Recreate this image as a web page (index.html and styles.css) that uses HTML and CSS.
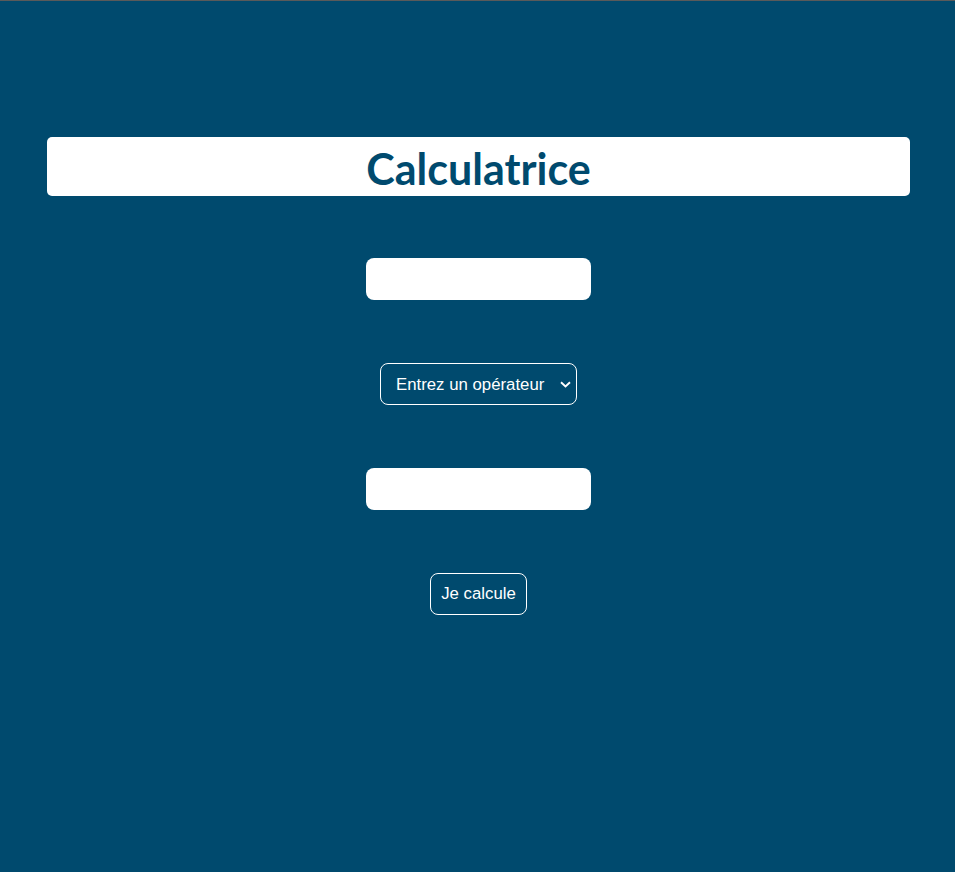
FILE: index.html
```html
<!DOCTYPE html>
<html lang="fr">
<head>
<meta charset="utf-8">
<title>Calculatrice</title>
<link rel="stylesheet" href="styles.css">
</head>
<body>
<div class="topline"></div>
<main class="page">
  <header class="banner"><h1 class="title">Calculatrice</h1></header>
  <form class="calc">
    <input class="field" type="text">
    <div class="select-wrap">
      <select class="operator">
        <option>Entrez un opérateur</option>
      </select>
      <svg class="chevron" width="11" height="7" viewBox="0 0 11 7"><path d="M1 1.2 L5.5 5.4 L10 1.2" fill="none" stroke="#fff" stroke-width="1.9"/></svg>
    </div>
    <input class="field" type="text">
    <button class="btn" type="button">Je calcule</button>
  </form>
</main>
</body>
</html>
```
FILE: styles.css
```css
html, body {
  margin: 0;
  padding: 0;
  height: 100%;
}
body {
  background: #004a6e;
  font-family: "Liberation Sans", Arial, sans-serif;
}
.topline {
  height: 1px;
  background: #5a5a5a;
}
.page {
  padding: 136px 45px 0 47px;
}
.banner {
  background: #fff;
  border-radius: 5px;
  height: 59px;
  display: flex;
  align-items: center;
  justify-content: center;
}
.title {
  margin: 0;
  color: #004a6e;
  font-family: "Lato", "Open Sans", sans-serif;
  font-weight: 700;
  font-size: 43px;
  line-height: 1;
  padding-top: 3px;
}
.calc {
  margin-top: 62px;
  display: flex;
  flex-direction: column;
  align-items: center;
  gap: 63px;
}
.field {
  width: 225px;
  height: 42px;
  box-sizing: border-box;
  border: none;
  border-radius: 8px;
  background: #fff;
  margin: 0;
}
.select-wrap {
  position: relative;
  width: 197px;
  height: 42px;
}
.operator {
  appearance: none;
  -webkit-appearance: none;
  width: 197px;
  height: 42px;
  box-sizing: border-box;
  border: 1px solid #fff;
  border-radius: 8px;
  background: transparent;
  color: #fff;
  font-family: "Liberation Sans", Arial, sans-serif;
  font-size: 16.8px;
  padding: 0 0 0 15px;
  margin: 0;
}
.chevron {
  position: absolute;
  right: 6px;
  top: 18px;
  pointer-events: none;
}
.btn {
  width: 97px;
  height: 42px;
  box-sizing: border-box;
  border: 1px solid #fff;
  border-radius: 8px;
  background: transparent;
  color: #fff;
  font-family: "Liberation Sans", Arial, sans-serif;
  font-size: 16.8px;
  padding: 0;
  margin: 0;
}
```
